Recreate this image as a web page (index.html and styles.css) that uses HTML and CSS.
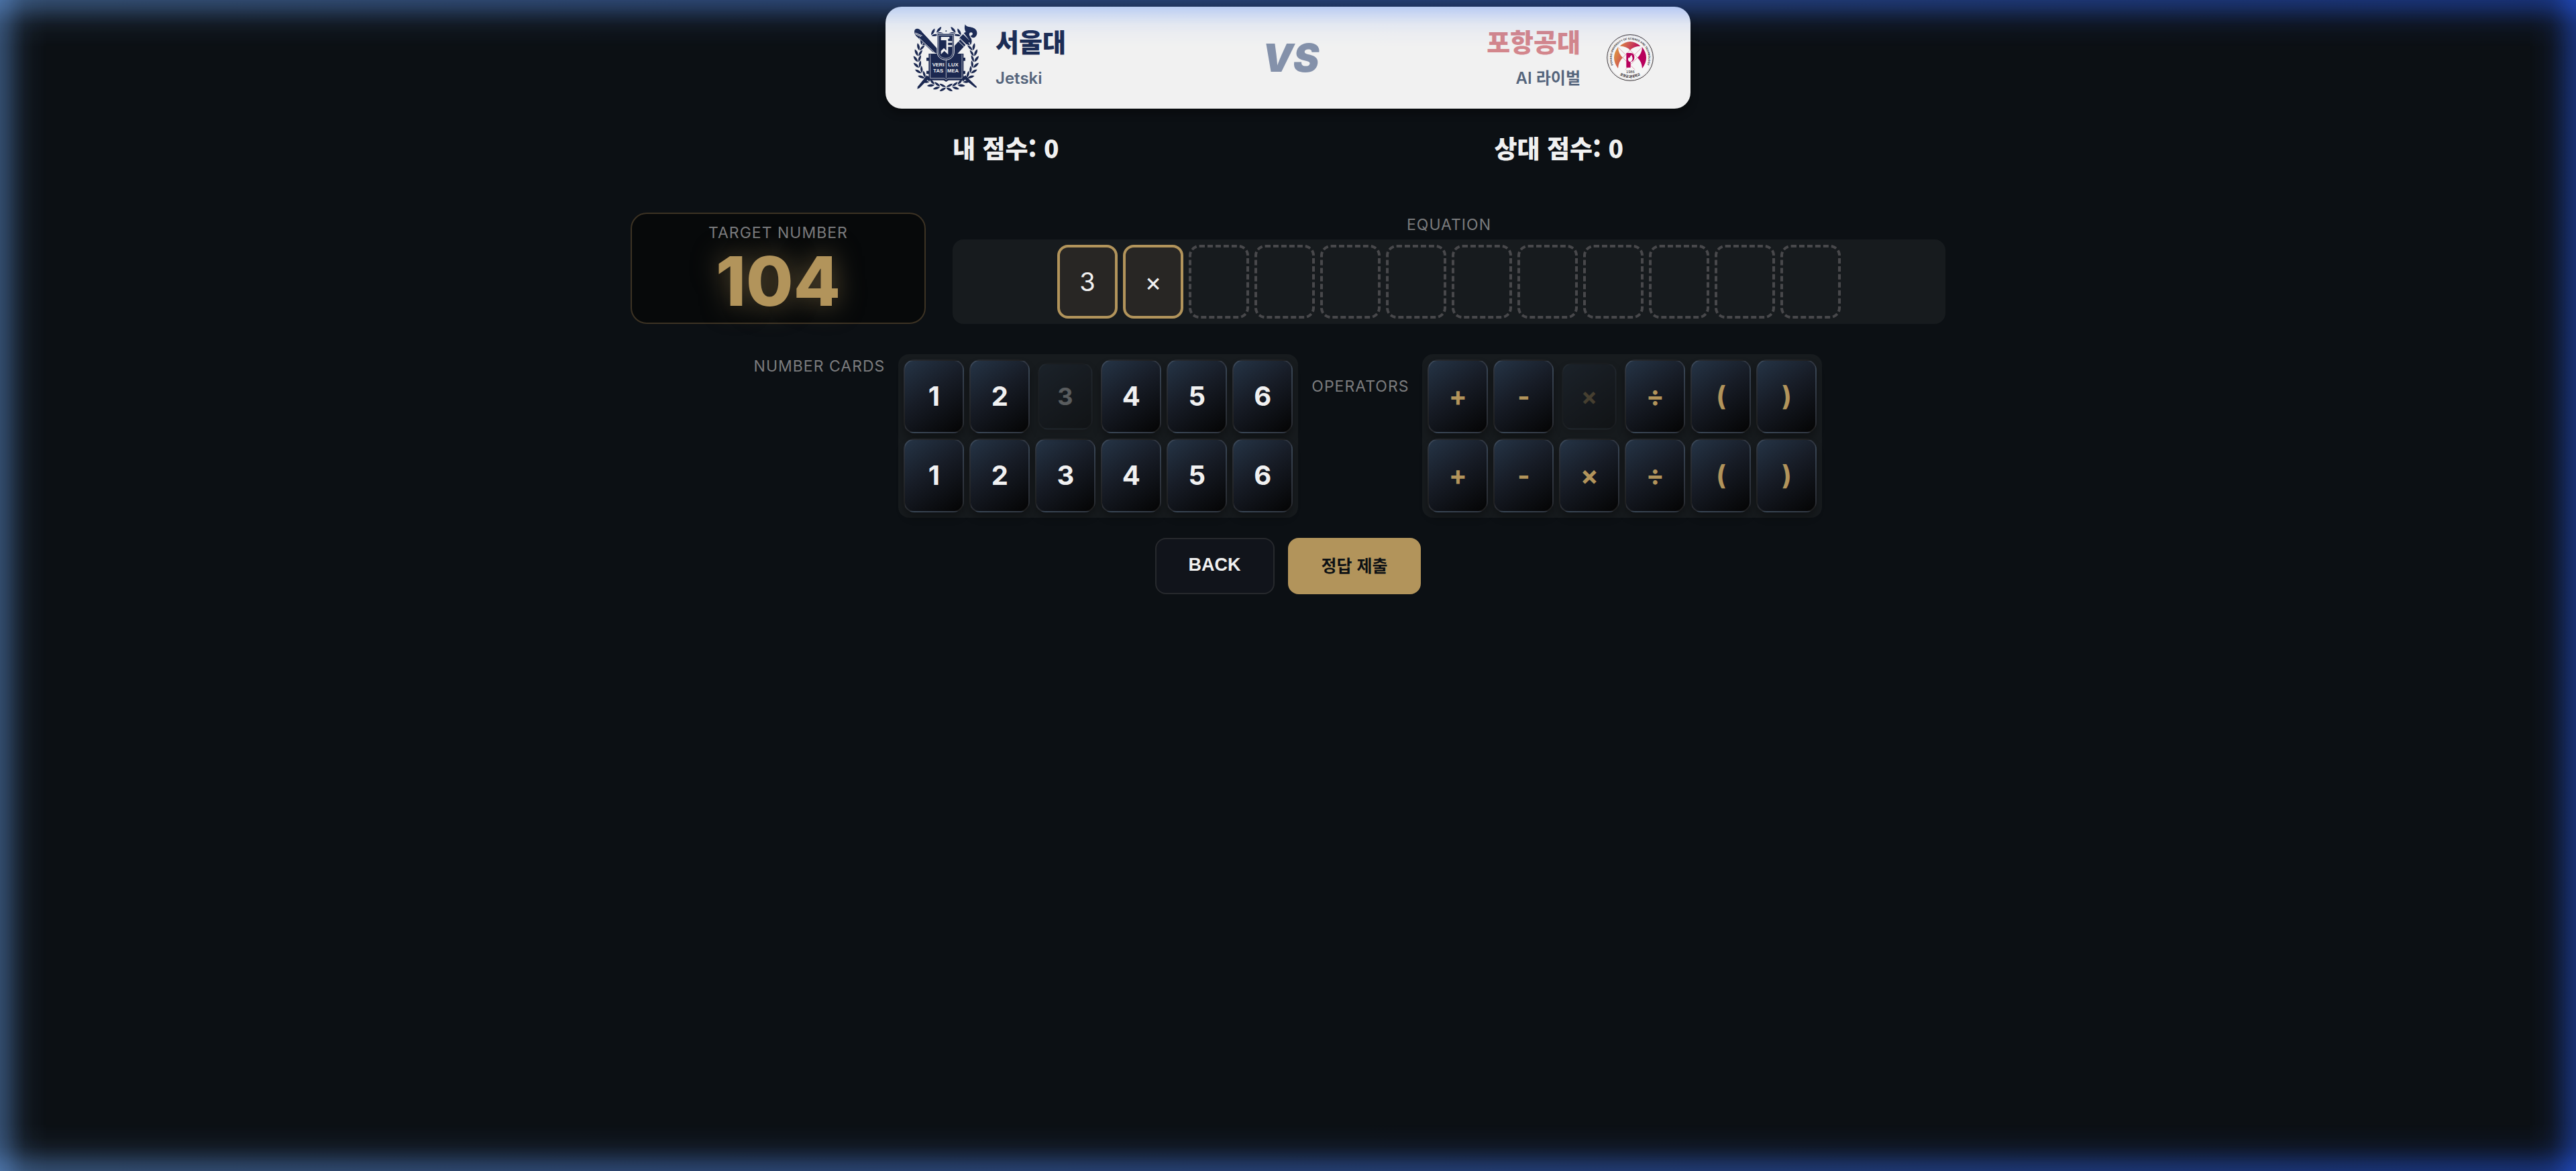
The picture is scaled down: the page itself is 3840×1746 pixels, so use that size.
FILE: index.html
```html
<!DOCTYPE html>
<html lang="ko">
<head>
  <meta charset="UTF-8">
  <meta name="viewport" content="width=device-width, initial-scale=1.0">
  <title>Number Battle</title>
  <link rel="stylesheet" href="styles.css">
</head>
<body>
  <div class="turn-glow"></div>

  <main class="game">
    <header class="versus-bar">
      <div class="team team-me">
        <svg class="team-logo" viewBox="60 48 300 300" role="img" aria-label="서울대">
          <defs>
            <g id="leaf">
              <path d="M217 78C212 67 202 60 189 60C193 71 203 79 217 78Z"/>
              <path d="M217 81C209 91 199 94 187 94C192 84 203 78 217 81Z"/>
            </g>
            <g id="branch">
              <use href="#leaf" transform="rotate(17 211 205)"/>
              <use href="#leaf" transform="rotate(29 211 205)"/>
              <use href="#leaf" transform="rotate(57 211 205)"/>
              <use href="#leaf" transform="rotate(69 211 205)"/>
              <use href="#leaf" transform="rotate(81 211 205)"/>
              <use href="#leaf" transform="rotate(93 211 205)"/>
              <use href="#leaf" transform="rotate(105 211 205)"/>
              <use href="#leaf" transform="rotate(117 211 205)"/>
              <use href="#leaf" transform="rotate(129 211 205)"/>
              <use href="#leaf" transform="rotate(141 211 205)"/>
              <use href="#leaf" transform="rotate(153 211 205)"/>
              <use href="#leaf" transform="rotate(165 211 205)"/>
              <use href="#leaf" transform="rotate(177 211 205)"/>
            </g>
          </defs>
          <g fill="#1b2850">
            <use href="#branch"/>
            <use href="#branch" transform="translate(422 0) scale(-1 1)"/>
            <circle cx="211" cy="79" r="3"/>
            <!-- pen -->
            <path d="M72 72C82 64 94 70 103 82L172 158V180L150 172L82 106C70 95 66 82 72 72Z"/>
            <path d="M282 285L298 278L348 328L346 334L336 328Z"/>
            <!-- torch -->
            <path d="M246 148L274 117L298 141L262 180H246Z"/>
            <path d="M269 111L287 93L319 124L302 141Z"/>
            <path d="M290 88L299 83C293 73 292 61 296 49C302 63 320 58 337 67C352 76 353 95 342 105C334 112 323 109 320 100C331 99 333 87 324 85C314 84 312 95 318 103L323 118L316 121Z"/>
            <path d="M140 285L124 278L84 328L82 338L92 334Z"/>
            <!-- book -->
            <path d="M123 198h12v14h-12zM285 198h12v14h-12zM123 257h12v14h-12zM285 257h12v14h-12z"/>
            <path d="M133 180H289V299H222L211 306L200 299H133Z"/>
          </g>
          <path d="M73 87L104 100M73 92L99 104M104 82L167 146M90 110L160 176M263 121L292 149M270 109L305 143" fill="none" stroke="#f1f1f1" stroke-width="3"/>
          <path d="M140 182V290H203L211 297L219 290H282V182M211 206V290" fill="none" stroke="#f1f1f1" stroke-width="2"/>
          <path d="M171 90H247V172C247 192 231 208 209 208C187 208 171 192 171 172Z" fill="#1b2850" stroke="#f1f1f1" stroke-width="3"/>
          <path d="M177 97H241V171C241 188 228 201 209 201C190 201 177 188 177 171Z" fill="none" stroke="#f1f1f1" stroke-width="2"/>
          <path d="M188 105H226V113H220V124H238V131H220V142H238V149H220V184L203 168L188 183V168L201 155L212 166V120H188Z" fill="#f1f1f1"/>
          <g class="motto">
            <text x="149" y="236">VERI</text>
            <text x="220" y="236">LUX</text>
            <text x="154" y="265">TAS</text>
            <text x="216" y="265">MEA</text>
          </g>
        </svg>
        <div class="team-info">
          <span class="team-name">서울대</span>
          <span class="team-player">Jetski</span>
        </div>
      </div>

      <span class="vs">VS</span>

      <div class="team team-rival">
        <div class="team-info">
          <span class="team-name">포항공대</span>
          <span class="team-player">AI 라이벌</span>
        </div>
        <svg class="team-logo" viewBox="0 8 300 300" role="img" aria-label="포항공대">
          <defs>
            <linearGradient id="sunset" gradientUnits="userSpaceOnUse" x1="85" y1="110" x2="205" y2="160">
              <stop offset="0" stop-color="#e09a3e"/>
              <stop offset="0.45" stop-color="#cc4a55"/>
              <stop offset="0.8" stop-color="#b8005c"/>
            </linearGradient>
            <path id="ring-top" d="M91 216A82 82 0 1 1 209 216"/>
            <path id="ring-bottom" d="M82 218A92 92 0 0 0 218 218"/>
          </defs>
          <circle cx="150" cy="158" r="103" fill="#f6f6f6" stroke="#3a3438" stroke-width="3"/>
          <circle cx="150" cy="158" r="98" fill="none" stroke="#b9b6b8" stroke-width="1"/>
          <g fill="url(#sunset)">
            <path d="M104 106Q150 66 196 106Q165 107 150 124Q135 107 104 106Z"/>
            <path d="M96 111Q60 158 96 206Q97 177 117 158Q97 139 96 111Z"/>
            <path d="M204 111Q240 158 204 206Q203 177 183 158Q203 139 204 111Z"/>
          </g>
          <path d="M150 124L117 158L172 212M150 124L183 158L128 212M96 111L130 145M204 111L170 145" fill="none" stroke="#d77a92" stroke-width="2"/>
          <path d="M133 137H152C164 137 169 146 169 156C169 169 162 176 152 177V202H133Z" fill="#b8005c"/>
          <path d="M147 176C138 170 140 161 145 156C146 160 148 160 149 157C150 152 153 148 158 146C156 153 162 156 161 163C160 171 156 175 151 177Z" fill="#f6f6f6"/>
          <text class="seal-text" text-anchor="middle"><textPath href="#ring-top" startOffset="50%">POHANG UNIVERSITY OF SCIENCE AND TECHNOLOGY</textPath></text>
          <text class="seal-text seal-korean" text-anchor="middle"><textPath href="#ring-bottom" startOffset="50%">포항공과대학교</textPath></text>
          <text class="seal-year" x="151" y="226" text-anchor="middle">1986</text>
        </svg>
      </div>
    </header>

    <div class="scores">
      <span>내 점수: 0</span>
      <span>상대 점수: 0</span>
    </div>

    <section class="board">
      <div class="target">
        <span class="label">TARGET NUMBER</span>
        <strong class="target-number">104</strong>
      </div>
      <div class="equation">
        <span class="label">EQUATION</span>
        <div class="tray slots">
          <div class="slot filled">3</div>
          <div class="slot filled">×</div>
          <div class="slot"></div>
          <div class="slot"></div>
          <div class="slot"></div>
          <div class="slot"></div>
          <div class="slot"></div>
          <div class="slot"></div>
          <div class="slot"></div>
          <div class="slot"></div>
          <div class="slot"></div>
          <div class="slot"></div>
        </div>
      </div>
    </section>

    <section class="hand">
      <span class="label">NUMBER CARDS</span>
      <div class="tray cards">
        <button class="card">1</button>
        <button class="card">2</button>
        <button class="card" disabled>3</button>
        <button class="card">4</button>
        <button class="card">5</button>
        <button class="card">6</button>
        <button class="card">1</button>
        <button class="card">2</button>
        <button class="card">3</button>
        <button class="card">4</button>
        <button class="card">5</button>
        <button class="card">6</button>
      </div>
      <span class="label label-operators">OPERATORS</span>
      <div class="tray cards operators">
        <button class="card">+</button>
        <button class="card">-</button>
        <button class="card" disabled>×</button>
        <button class="card">÷</button>
        <button class="card">(</button>
        <button class="card">)</button>
        <button class="card">+</button>
        <button class="card">-</button>
        <button class="card">×</button>
        <button class="card">÷</button>
        <button class="card">(</button>
        <button class="card">)</button>
      </div>
    </section>

    <div class="actions">
      <button class="btn">BACK</button>
      <button class="btn btn-submit">정답 제출</button>
    </div>
  </main>
</body>
</html>
```

FILE: styles.css
```css
:root {
  --bg: #0c1014;
  --gold: #b2945b;
  --text: #f1f1f1;
  --muted: #7b7c7e;
}

* {
  box-sizing: border-box;
}

body {
  margin: 0;
  min-height: 100vh;
  background: var(--bg);
  color: var(--text);
  font-family: Inter, "Noto Sans CJK KR", sans-serif;
}

/* Blue light around the window edges */
.turn-glow {
  position: fixed;
  inset: 0;
  z-index: 10;
  pointer-events: none;
  --fade: rgba(0, 0, 0, 0.4), rgba(0, 0, 0, 0.31) 12px, rgba(0, 0, 0, 0.19) 24px, rgba(0, 0, 0, 0.08) 37px, rgba(0, 0, 0, 0.03) 50px, transparent 70px;
  background: linear-gradient(to right, #6ba4f0, #2860ff);
  mask-image:
    linear-gradient(to right, var(--fade)),
    linear-gradient(to left, var(--fade)),
    linear-gradient(to bottom, var(--fade)),
    linear-gradient(to top, var(--fade));
}

.game {
  display: flex;
  flex-direction: column;
  align-items: center;
  padding: 10px 20px;
}

/* Match header */
.versus-bar {
  display: grid;
  grid-template-columns: 1fr auto 1fr;
  align-items: center;
  width: 100%;
  max-width: 1200px;
  padding: 26px 40px;
  background: #f1f1f1;
  border-radius: 24px;
  box-shadow: 0 8px 12px rgba(0, 0, 0, 0.3);
}

.team {
  display: flex;
  align-items: center;
  gap: 24px;
}

.team-rival {
  justify-content: flex-end;
  text-align: right;
}

.team-logo {
  width: 100px;
  height: 100px;
}

.team-info {
  display: flex;
  flex-direction: column;
  gap: 14px;
}

.team-name {
  font-size: 38px;
  font-weight: 800;
  line-height: 48px;
  color: #1b2c54;
}

.team-rival .team-name {
  color: #d3868c;
}

.team-player {
  font-size: 24px;
  font-weight: 600;
  line-height: 32px;
  color: #55657c;
}

.vs {
  padding-left: 8px;
  font-size: 58px;
  font-weight: 900;
  font-style: italic;
  line-height: 72px;
  color: #8491aa;
}

.motto {
  font: bold 23px "Liberation Sans", sans-serif;
  fill: #f1f1f1;
}

.seal-text {
  font: bold 12px "Liberation Sans", "Noto Sans CJK KR", sans-serif;
  fill: #2c262a;
}

.seal-korean {
  font-size: 15px;
}

.seal-year {
  font: 17px "Liberation Sans", sans-serif;
  fill: #2c262a;
}

.scores {
  display: flex;
  justify-content: space-between;
  width: 100%;
  max-width: 1000px;
  margin-top: 34px;
  font-family: "Noto Sans CJK KR", sans-serif;
  font-size: 37px;
  font-weight: 900;
  line-height: 48px;
}

/* Target and equation */
.board {
  display: grid;
  grid-template-columns: 440px 1fr;
  align-items: end;
  gap: 40px;
  width: 100%;
  max-width: 1960px;
  margin-top: 73px;
}

.label {
  font-size: 23px;
  line-height: 36px;
  letter-spacing: 1px;
  color: var(--muted);
}

.target {
  display: flex;
  flex-direction: column;
  align-items: center;
  padding: 10px 20px 8px;
  background: #07090a;
  border: 2px solid #3d3324;
  border-radius: 24px;
}

.target-number {
  font-size: 102px;
  font-weight: 800;
  line-height: 108px;
  color: var(--gold);
  text-shadow: 0 0 40px rgba(178, 148, 91, 0.5);
}

.equation {
  display: flex;
  flex-direction: column;
  gap: 4px;
  text-align: center;
}

.tray {
  padding: 8px;
  background: #171b1e;
  border-radius: 16px;
}

.slots {
  display: flex;
  justify-content: center;
  gap: 8px;
}

.slot {
  display: flex;
  align-items: center;
  justify-content: center;
  width: 90px;
  height: 110px;
  border: 4px dashed #48484b;
  border-radius: 16px;
  font-size: 38px;
}

.slot.filled {
  border: 4px solid var(--gold);
  background: #282624;
}

/* Cards */
.hand {
  display: flex;
  justify-content: center;
  align-items: flex-start;
  gap: 20px;
  margin-top: 45px;
}

.label-operators {
  margin-top: 30px;
}

.cards {
  display: grid;
  grid-template-columns: repeat(6, 90px);
  gap: 8px;
}

.card {
  height: 110px;
  padding: 0 0 2px;
  border: 2px solid rgba(255, 255, 255, 0.1);
  border-radius: 16px;
  background: linear-gradient(145deg, #253446, #171c26 45%, #040404);
  box-shadow: 0 8px 12px rgba(0, 0, 0, 0.3);
  color: var(--text);
  font-family: inherit;
  font-size: 40px;
  font-weight: 700;
  cursor: pointer;
}

.card:disabled {
  opacity: 0.3;
  transform: scale(0.9);
  cursor: default;
}

.operators .card {
  color: var(--gold);
}

/* Buttons */
.actions {
  display: flex;
  gap: 20px;
  margin-top: 30px;
}

.btn {
  height: 84px;
  padding: 0 48px 4px;
  border: 2px solid #27292d;
  border-radius: 16px;
  background: #11141b;
  color: var(--text);
  font-family: "Liberation Sans", "Noto Sans CJK KR", sans-serif;
  font-size: 27px;
  font-weight: 700;
  cursor: pointer;
}

.btn-submit {
  border-color: var(--gold);
  background: var(--gold);
  color: #0c1014;
  font-size: 25px;
}
```
